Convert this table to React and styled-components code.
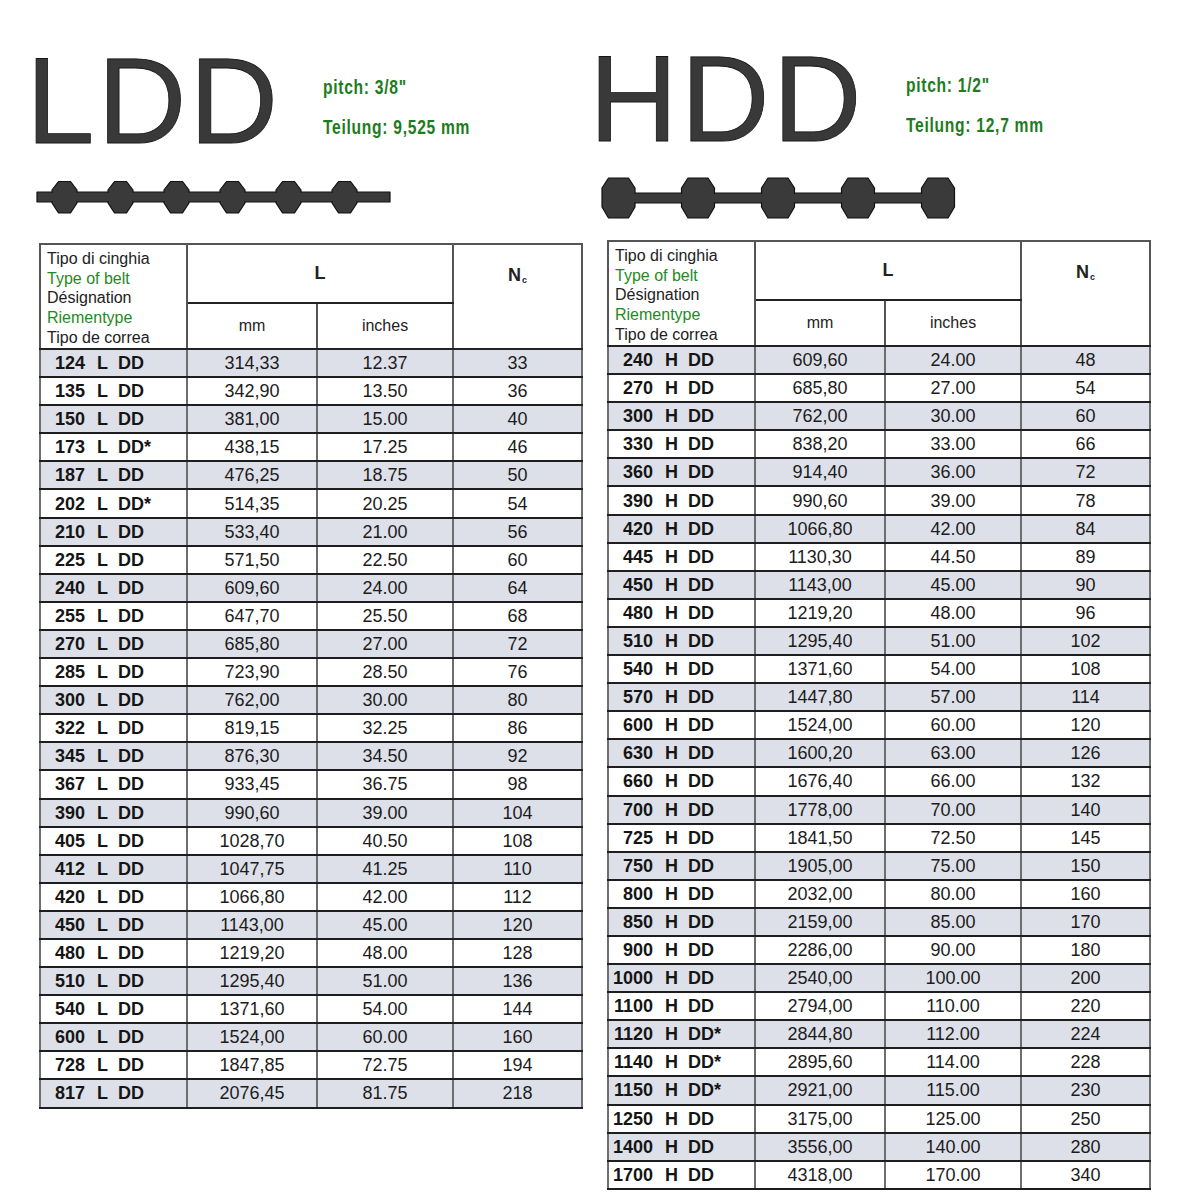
import React from "react";
import styled, { createGlobalStyle } from "styled-components";

const GlobalStyle = createGlobalStyle`
  html, body {
    margin: 0;
    padding: 0;
    background: #fff;
  }
  body {
    font-family: "Liberation Sans", Arial, sans-serif;
    color: #1a1a1a;
  }
`;

const Page = styled.div`
  width: 1184px;
  height: 1199px;
  overflow: hidden;
  display: flex;
  align-items: flex-start;
  padding-left: 36px;
  box-sizing: border-box;
  gap: 22px;
  background: #fff;
`;

const Panel = styled.section`
  width: 548px;
  display: flex;
  flex-direction: column;
  padding-top: ${p => p.$top}px;
`;

const TitleRow = styled.div`
  display: flex;
  align-items: flex-start;
  gap: 42px;
  margin-left: ${p => p.$shift}px;
`;

const BigTitle = styled.h1`
  margin: 0;
  font-family: "Liberation Sans", Arial, sans-serif;
  font-weight: 400;
  font-size: 123px;
  line-height: 1;
  letter-spacing: 3px;
  color: #393939;
  -webkit-text-stroke: 0.8px #151515;
`;

const Pitch = styled.div`
  display: flex;
  flex-direction: column;
  padding-top: 28px;
  font-family: "Liberation Sans", Arial, sans-serif;
  font-weight: 700;
  font-size: 19.5px;
  line-height: 40px;
  letter-spacing: 0.9px;
  color: #1d7c1d;
  white-space: nowrap;
  transform: scaleX(0.8);
  transform-origin: left top;
`;

const BeltBox = styled.div`
  margin-top: ${p => p.$gap}px;
  margin-left: ${p => p.$shift}px;
  height: ${p => p.$h}px;
  display: flex;
`;

const Table = styled.table`
  margin-top: ${p => p.$gap}px;
  margin-left: ${p => p.$shift}px;
  width: 542px;
  border-collapse: collapse;
  table-layout: fixed;
  border: 2px solid #3a3a3a;
  font-family: "Liberation Sans", Arial, sans-serif;
`;

const HeadCell = styled.th`
  border: 2px solid #555;
  border-bottom-color: #222;
  font-weight: ${p => (p.$bold ? 700 : 400)};
  font-size: ${p => (p.$bold ? 18 : 16)}px;
  color: #222;
  text-align: center;
  vertical-align: ${p => (p.$top ? "top" : "middle")};
  padding: ${p => (p.$top ? "20px 0 0" : "0")};
`;

const TypeCell = styled.th`
  border: 2px solid #555;
  border-bottom-color: #222;
  text-align: left;
  vertical-align: top;
  padding: 4px 6px 0;
  font-weight: 400;
  font-size: 16px;
  line-height: 19.7px;
  color: #222;
`;

const Lang = styled.div`
  color: ${p => (p.$green ? "#1f8a1f" : "#222")};
  white-space: nowrap;
`;

const Sub = styled.span`
  font-size: 9px;
  vertical-align: -2px;
  margin-left: 1px;
`;

const Row = styled.tr`
  height: 28.1px;
  background: ${p => (p.$shade ? "#dde0e8" : "#fff")};
`;

const Cell = styled.td`
  border-left: 2px solid #6e6e6e;
  border-right: 2px solid #6e6e6e;
  border-bottom: 2px solid #1e1e1e;
  padding: 0;
  text-align: center;
  font-size: 18px;
  line-height: 24px;
  color: #1c1c1c;
  white-space: nowrap;
`;

const Code = styled.div`
  display: flex;
  align-items: baseline;
  font-weight: 700;
  font-size: 18px;
  color: #151515;
`;

const Num = styled.span`
  width: 44px;
  text-align: right;
`;

const Letter = styled.span`
  margin-left: 12px;
`;

const Suffix = styled.span`
  margin-left: 10px;
`;

const ldd = [
  ["124", "", "314,33", "12.37", "33"],
  ["135", "", "342,90", "13.50", "36"],
  ["150", "", "381,00", "15.00", "40"],
  ["173", "*", "438,15", "17.25", "46"],
  ["187", "", "476,25", "18.75", "50"],
  ["202", "*", "514,35", "20.25", "54"],
  ["210", "", "533,40", "21.00", "56"],
  ["225", "", "571,50", "22.50", "60"],
  ["240", "", "609,60", "24.00", "64"],
  ["255", "", "647,70", "25.50", "68"],
  ["270", "", "685,80", "27.00", "72"],
  ["285", "", "723,90", "28.50", "76"],
  ["300", "", "762,00", "30.00", "80"],
  ["322", "", "819,15", "32.25", "86"],
  ["345", "", "876,30", "34.50", "92"],
  ["367", "", "933,45", "36.75", "98"],
  ["390", "", "990,60", "39.00", "104"],
  ["405", "", "1028,70", "40.50", "108"],
  ["412", "", "1047,75", "41.25", "110"],
  ["420", "", "1066,80", "42.00", "112"],
  ["450", "", "1143,00", "45.00", "120"],
  ["480", "", "1219,20", "48.00", "128"],
  ["510", "", "1295,40", "51.00", "136"],
  ["540", "", "1371,60", "54.00", "144"],
  ["600", "", "1524,00", "60.00", "160"],
  ["728", "", "1847,85", "72.75", "194"],
  ["817", "", "2076,45", "81.75", "218"],
];

const hdd = [
  ["240", "", "609,60", "24.00", "48"],
  ["270", "", "685,80", "27.00", "54"],
  ["300", "", "762,00", "30.00", "60"],
  ["330", "", "838,20", "33.00", "66"],
  ["360", "", "914,40", "36.00", "72"],
  ["390", "", "990,60", "39.00", "78"],
  ["420", "", "1066,80", "42.00", "84"],
  ["445", "", "1130,30", "44.50", "89"],
  ["450", "", "1143,00", "45.00", "90"],
  ["480", "", "1219,20", "48.00", "96"],
  ["510", "", "1295,40", "51.00", "102"],
  ["540", "", "1371,60", "54.00", "108"],
  ["570", "", "1447,80", "57.00", "114"],
  ["600", "", "1524,00", "60.00", "120"],
  ["630", "", "1600,20", "63.00", "126"],
  ["660", "", "1676,40", "66.00", "132"],
  ["700", "", "1778,00", "70.00", "140"],
  ["725", "", "1841,50", "72.50", "145"],
  ["750", "", "1905,00", "75.00", "150"],
  ["800", "", "2032,00", "80.00", "160"],
  ["850", "", "2159,00", "85.00", "170"],
  ["900", "", "2286,00", "90.00", "180"],
  ["1000", "", "2540,00", "100.00", "200"],
  ["1100", "", "2794,00", "110.00", "220"],
  ["1120", "*", "2844,80", "112.00", "224"],
  ["1140", "*", "2895,60", "114.00", "228"],
  ["1150", "*", "2921,00", "115.00", "230"],
  ["1250", "", "3175,00", "125.00", "250"],
  ["1400", "", "3556,00", "140.00", "280"],
  ["1700", "", "4318,00", "170.00", "340"],
];

// belt drawing: strip plus hexagon-ish teeth
function Belt({ width, height, strip, from, to, teeth, t }) {
  const tooth = cx =>
    [
      [cx - t.flat, t.top],
      [cx + t.flat, t.top],
      [cx + t.wide, t.y1],
      [cx + t.wide, t.y2],
      [cx + t.flat, t.bottom],
      [cx - t.flat, t.bottom],
      [cx - t.wide, t.y2],
      [cx - t.wide, t.y1],
    ]
      .map(p => p.join(","))
      .join(" ");
  return (
    <svg width={width} height={height} viewBox={`0 0 ${width} ${height}`}>
      <g fill="#3a3a3a" stroke="#111" strokeWidth="1.2" strokeLinejoin="round">
        <rect x={from} y={strip[0]} width={to - from} height={strip[1] - strip[0]} />
        {teeth.map(cx => (
          <polygon key={cx} points={tooth(cx)} />
        ))}
      </g>
      <rect x={from + 1} y={strip[0] + 0.8} width={to - from - 2} height={strip[1] - strip[0] - 1.6} fill="#3a3a3a" />
    </svg>
  );
}

function BeltTable({ rows, letter, gap, shift }) {
  return (
    <Table $gap={gap} $shift={shift}>
      <colgroup>
        <col style={{ width: 147 }} />
        <col style={{ width: 130 }} />
        <col style={{ width: 136 }} />
        <col style={{ width: 129 }} />
      </colgroup>
      <thead>
        <tr style={{ height: 59 }}>
          <TypeCell rowSpan={2}>
            <Lang>Tipo di cinghia</Lang>
            <Lang $green>Type of belt</Lang>
            <Lang>Désignation</Lang>
            <Lang $green>Riementype</Lang>
            <Lang>Tipo de correa</Lang>
          </TypeCell>
          <HeadCell colSpan={2} $bold>
            L
          </HeadCell>
          <HeadCell rowSpan={2} $bold $top>
            N<Sub>c</Sub>
          </HeadCell>
        </tr>
        <tr style={{ height: 46 }}>
          <HeadCell>mm</HeadCell>
          <HeadCell>inches</HeadCell>
        </tr>
      </thead>
      <tbody>
        {rows.map(([n, star, mm, inch, nc], i) => (
          <Row key={n} $shade={i % 2 === 0}>
            <Cell>
              <Code>
                <Num>{n}</Num>
                <Letter>{letter}</Letter>
                <Suffix>DD{star}</Suffix>
              </Code>
            </Cell>
            <Cell>{mm}</Cell>
            <Cell>{inch}</Cell>
            <Cell>{nc}</Cell>
          </Row>
        ))}
      </tbody>
    </Table>
  );
}

export default function App() {
  return (
    <>
      <GlobalStyle />
      <Page>
        <Panel $top={39}>
          <TitleRow $shift={-10}>
            <BigTitle>LDD</BigTitle>
            <Pitch>
              <span>pitch: 3/8"</span>
              <span>Teilung: 9,525 mm</span>
            </Pitch>
          </TitleRow>
          <BeltBox $gap={18} $h={34} $shift={0}>
            <Belt
              width={356}
              height={34}
              strip={[12, 22]}
              from={1}
              to={354}
              teeth={[28.5, 84.5, 140.5, 196.5, 252.5, 308.5]}
              t={{ flat: 6, wide: 12.5, top: 1.5, y1: 10, y2: 23, bottom: 33 }}
            />
          </BeltBox>
          <BeltTable rows={ldd} letter="L" gap={29} shift={3} />
        </Panel>
        <Panel $top={37}>
          <TitleRow $shift={-17}>
            <BigTitle>HDD</BigTitle>
            <Pitch>
              <span>pitch: 1/2"</span>
              <span>Teilung: 12,7 mm</span>
            </Pitch>
          </TitleRow>
          <BeltBox $gap={15} $h={45} $shift={-6}>
            <Belt
              width={358}
              height={45}
              strip={[18, 28]}
              from={18}
              to={338}
              teeth={[18.5, 98, 178, 258, 338]}
              t={{ flat: 10, wide: 16.5, top: 3, y1: 13, y2: 32, bottom: 43 }}
            />
          </BeltBox>
          <BeltTable rows={hdd} letter="H" gap={20} shift={1} />
        </Panel>
      </Page>
    </>
  );
}
